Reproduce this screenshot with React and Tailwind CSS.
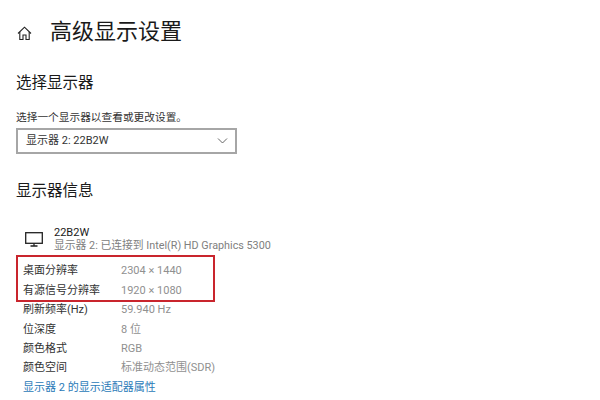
import React from 'react'

const rows = [
  { label: '桌面分辨率', value: '2304 × 1440' },
  { label: '有源信号分辨率', value: '1920 × 1080' },
  { label: '刷新频率(Hz)', value: '59.940 Hz' },
  { label: '位深度', value: '8 位' },
  { label: '颜色格式', value: 'RGB' },
  { label: '颜色空间', value: '标准动态范围(SDR)' },
]

const font = { fontFamily: 'Roboto, "Noto Sans CJK SC", sans-serif' }

function App() {
  return (
    <div className="w-[600px] h-[400px] overflow-hidden bg-white relative pl-4 pt-[17px] text-[#1a1a1a]" style={font}>
      <div className="flex items-center h-[30px]">
        <svg width="15" height="15" viewBox="0 0 15 15" fill="none" stroke="#222" strokeWidth="1.1" className="mr-[18px] mt-[2px] ml-[1px]">
          <path d="M1 7.5 7.5 1.2 14 7.5" />
          <path d="M2.8 6v7.5h3.2V9h3v4.5h3.2V6" />
        </svg>
        <span className="text-[22px] leading-[30px]">高级显示设置</span>
      </div>
      <div className="text-[15.5px] leading-[22px] mt-[25px]">选择显示器</div>
      <div className="text-[10.7px] leading-[16px] mt-[16px] text-[#333]">选择一个显示器以查看或更改设置。</div>
      <div className="w-[221px] h-[26px] mt-[2px] border-2 border-[#a6a6a6] flex items-center justify-between pl-[8px] pr-[7px] text-[11px] text-[#333]">
        <span>显示器 2: 22B2W</span>
        <svg width="11" height="6" viewBox="0 0 11 6" fill="none" stroke="#555" strokeWidth="0.9">
          <path d="M1 .5 5.5 5 10 .5" />
        </svg>
      </div>
      <div className="text-[15.5px] leading-[22px] mt-[26px]">显示器信息</div>
      <div className="flex items-center mt-[24px] ml-[9px]">
        <svg width="18" height="15" viewBox="0 0 18 15" fill="none" stroke="#222" strokeWidth="1.3" className="mr-[11px]">
          <rect x="0.7" y="0.7" width="16.6" height="10.6" />
          <path d="M9 11.5v2.5M5.5 14h7" />
        </svg>
        <div>
          <div className="text-[11px] leading-[13px]">22B2W</div>
          <div className="text-[10.8px] leading-[13px] text-[#808080]">显示器 2: 已连接到 Intel(R) HD Graphics 5300</div>
        </div>
      </div>
      <div className="ml-[7px] mt-[10px]">
        {rows.map((row) => (
          <div key={row.label} className="flex h-[19.4px] items-center text-[11px]">
            <span className="w-[98px] text-[#333]">{row.label}</span>
            <span className="text-[#909090]">{row.value}</span>
          </div>
        ))}
        <div className="text-[11px] leading-[19px] text-[#2a7ab8]">显示器 2 的显示适配器属性</div>
      </div>
      <div className="absolute left-[16px] top-[255px] w-[199px] h-[47px] border-2 border-[#c9252d]" />
    </div>
  )
}

export default App
